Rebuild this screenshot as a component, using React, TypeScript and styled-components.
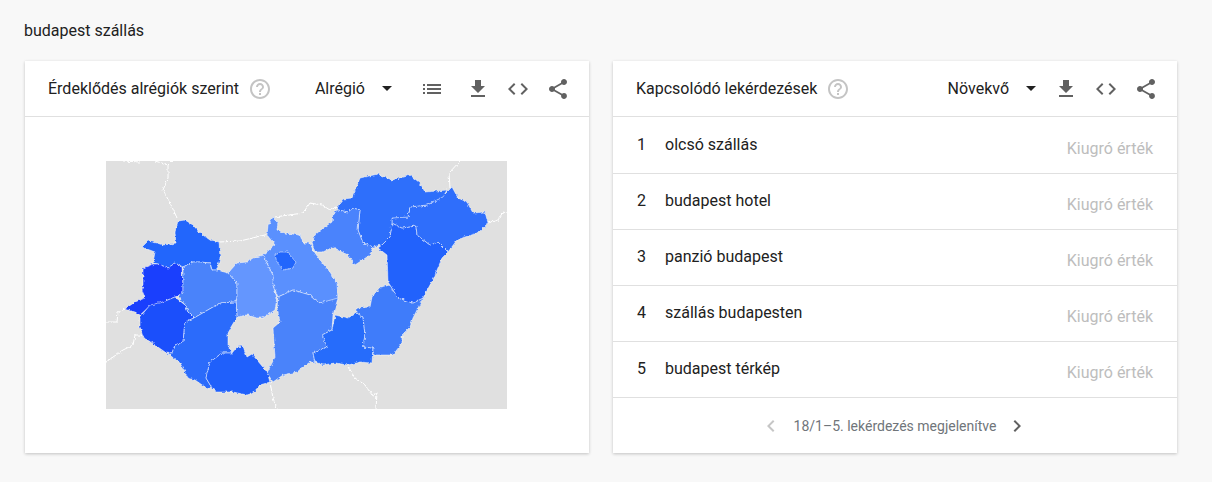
import { FC } from "react";
import styled, { createGlobalStyle } from "styled-components";

const GlobalStyle = createGlobalStyle`
  html, body {
    margin: 0;
    padding: 0;
    background: #f8f8f8;
    font-family: Roboto, "Liberation Sans", sans-serif;
  }
`;

const ICONS = {
  help: "M11 18h2v-2h-2v2zm1-16C6.48 2 2 6.48 2 12s4.48 10 10 10 10-4.48 10-10S17.52 2 12 2zm0 18c-4.41 0-8-3.59-8-8s3.59-8 8-8 8 3.59 8 8-3.59 8-8 8zm0-14c-2.21 0-4 1.79-4 4h2c0-1.1.9-2 2-2s2 .9 2 2c0 2-3 1.75-3 5h2c0-2.25 3-2.5 3-5 0-2.21-1.79-4-4-4z",
  list: "M3 13h2v-2H3v2zm0 4h2v-2H3v2zm0-8h2V7H3v2zm4 4h14v-2H7v2zm0 4h14v-2H7v2zM7 7v2h14V7H7z",
  download: "M19 9h-4V3H9v6H5l7 7 7-7zM5 18v2h14v-2H5z",
  code: "M9.4 16.6L4.8 12l4.6-4.6L8 6l-6 6 6 6 1.4-1.4zm5.2 0l4.6-4.6-4.6-4.6L16 6l6 6-6 6-1.4-1.4z",
  share:
    "M18 16.08c-.76 0-1.44.3-1.96.77L8.91 12.7c.05-.23.09-.46.09-.7s-.04-.47-.09-.7l7.05-4.11c.54.5 1.25.81 2.04.81 1.66 0 3-1.34 3-3s-1.34-3-3-3-3 1.34-3 3c0 .24.04.47.09.7L8.04 9.81C7.5 9.31 6.79 9 6 9c-1.66 0-3 1.34-3 3s1.34 3 3 3c.79 0 1.5-.31 2.04-.81l7.12 4.16c-.05.21-.08.43-.08.65 0 1.61 1.31 2.92 2.92 2.92 1.61 0 2.92-1.31 2.92-2.92s-1.31-2.92-2.92-2.92z",
  prev: "M15.41 7.41L14 6l-6 6 6 6 1.41-1.41L10.83 12z",
  next: "M10 6L8.59 7.41 13.17 12l-4.58 4.59L10 18l6-6z",
};

const Icon: FC<{ name: keyof typeof ICONS; color?: string }> = ({
  name,
  color = "#616161",
}) => (
  <IconSvg viewBox="0 0 24 24" fill={color}>
    <path d={ICONS[name]} />
  </IconSvg>
);

const REGIONS: { fill: string; points: string }[] = [
  {
    fill: "#2266fc",
    points:
      "142,247 148,241 157,243 163,245 176,243 175,232 178,221 185,220 193,225 200,233 210,240 219,242 220,258 217,270 212,270 210,263 200,262 193,262 183,267 175,263 168,268 158,264 153,263 155,252 147,249",
  },
  {
    fill: "#1a3ffd",
    points:
      "143,268 153,264 158,264 168,268 175,263 182,267 183,285 183,293 175,297 163,302 150,306 140,315 135,312 125,309 135,302 145,298 142,290 143,285",
  },
  {
    fill: "#1b4ffb",
    points:
      "140,317 150,305 163,302 175,297 185,305 188,312 194,318 185,322 183,342 175,345 172,353 165,352 155,345 143,337 140,327",
  },
  {
    fill: "#4a83fa",
    points:
      "183,267 193,262 200,262 210,263 212,270 217,270 228,273 237,283 237,298 236,302 220,303 194,318 188,312 185,305 178,296 183,293",
  },
  {
    fill: "#6496fe",
    points:
      "228,273 237,263 247,262 253,258 263,255 268,265 273,275 273,285 277,298 275,310 263,318 257,318 247,315 237,317 236,302 237,298 237,283",
  },
  {
    fill: "#5a90fe",
    points:
      "268,225 273,217 278,222 277,230 285,233 300,235 303,243 310,243 313,250 320,260 330,272 337,283 338,300 325,302 320,303 310,295 293,290 278,297 273,285 273,275 263,255 275,245 267,235",
  },
  {
    fill: "#2266fc",
    points: "275,255 280,252 287,252 296,262 293,268 283,270 277,262",
  },
  {
    fill: "#4a83fa",
    points:
      "278,297 293,290 310,295 320,303 338,298 333,315 332,330 322,335 327,347 313,353 315,362 310,362 297,372 283,375 273,382 267,373 275,357 273,328 280,322 277,308",
  },
  {
    fill: "#266cfb",
    points:
      "335,315 348,318 357,313 363,317 365,335 363,347 373,348 372,363 360,362 348,365 335,363 323,365 315,362 313,353 327,347 322,335 332,330",
  },
  {
    fill: "#3f7cfa",
    points:
      "357,308 370,307 372,297 380,287 390,285 398,298 413,303 423,298 413,318 410,327 402,335 402,343 393,355 373,355 373,348 363,347 365,335 363,317 357,313",
  },
  {
    fill: "#2262fc",
    points:
      "378,248 387,255 388,282 390,285 398,298 413,303 423,298 430,285 433,280 442,258 448,252 438,242 430,245 417,235 416,226 402,228 392,223 390,237 382,245",
  },
  {
    fill: "#2f6efb",
    points:
      "392,218 398,217 408,217 410,207 427,205 442,197 452,187 458,198 467,202 473,213 485,212 488,223 478,233 465,237 457,240 448,252 438,242 430,245 417,235 416,226 402,228 392,223",
  },
  {
    fill: "#2e6ffb",
    points:
      "337,207 343,199 352,198 360,178 378,174 392,180 410,175 420,183 425,192 447,190 443,197 427,205 410,207 408,217 392,218 392,223 390,237 382,245 373,247 363,243 358,230 360,210 353,208 348,212 338,210",
  },
  {
    fill: "#4a83fc",
    points:
      "333,213 338,210 348,212 353,208 360,210 358,230 363,243 373,247 370,255 355,265 348,255 342,252 333,247 323,252 315,252 312,243 315,235 323,228 332,222",
  },
  {
    fill: "#2b6bfb",
    points:
      "194,318 220,303 236,302 237,317 228,332 228,345 232,353 222,353 210,362 206,378 212,388 208,389 195,380 188,378 180,363 167,353 172,353 175,345 183,342 185,322",
  },
  {
    fill: "#2060fb",
    points:
      "210,362 222,353 232,353 237,347 243,346 247,357 252,354 267,372 270,382 260,385 253,393 247,395 233,392 217,392 212,388 206,378",
  },
];

const BORDERS = [
  "123,161 140,162",
  "155,161 168,165 172,161",
  "168,165 168,178 163,190 172,207 177,218",
  "219,242 240,241 265,235 270,234",
  "275,217 303,213 310,203 322,205 330,210 337,207",
  "450,188 449,173 460,161",
  "488,223 498,220 503,212 507,213",
  "270,382 273,398 277,409",
  "106,322 117,322 118,312 125,309",
  "106,362 123,350 133,345 135,335 140,335 147,337",
  "348,367 355,378 365,385 372,395 377,393 376,409",
];

const RegionMap: FC = () => (
  <MapSvg viewBox="106 161 401 248">
    <defs>
      <filter
        id="rough"
        x="106"
        y="161"
        width="401"
        height="248"
        filterUnits="userSpaceOnUse"
        colorInterpolationFilters="sRGB"
      >
        <feTurbulence type="fractalNoise" baseFrequency="0.32" numOctaves="2" seed="4" />
        <feDisplacementMap
          in="SourceGraphic"
          scale="3.5"
          xChannelSelector="R"
          yChannelSelector="G"
        />
        <feGaussianBlur stdDeviation="0.3" />
      </filter>
    </defs>
    <rect x="106" y="161" width="401" height="248" fill="#e0e0e0" />
    <g filter="url(#rough)">
      {BORDERS.map((points) => (
        <polyline key={points} points={points} fill="none" stroke="#fff" strokeWidth="1" />
      ))}
      {REGIONS.map((r) => (
        <polygon
          key={r.points}
          points={r.points}
          fill={r.fill}
          stroke="#fff"
          strokeOpacity="0.55"
          strokeWidth="0.9"
        />
      ))}
    </g>
  </MapSvg>
);

const QUERIES = [
  "olcsó szállás",
  "budapest hotel",
  "panzió budapest",
  "szállás budapesten",
  "budapest térkép",
];

const CardHeader: FC<{ title: string; filter: string; hasList?: boolean }> = ({
  title,
  filter,
  hasList,
}) => (
  <Header>
    <CardTitle>{title}</CardTitle>
    <HelpSlot>
      <Icon name="help" color="#c4c4c4" />
    </HelpSlot>
    <Select>
      {filter}
      <Caret />
    </Select>
    {hasList && (
      <ListSlot>
        <Icon name="list" />
      </ListSlot>
    )}
    <Actions>
      <Icon name="download" />
      <Icon name="code" />
      <Icon name="share" />
    </Actions>
  </Header>
);

export default function App() {
  return (
    <Page>
      <GlobalStyle />
      <Term>budapest szállás</Term>
      <Cards>
        <Card>
          <CardHeader title="Érdeklődés alrégiók szerint" filter="Alrégió" hasList />
          <MapBody>
            <RegionMap />
          </MapBody>
        </Card>
        <Card>
          <CardHeader title="Kapcsolódó lekérdezések" filter="Növekvő" />
          <List>
            {QUERIES.map((q, i) => (
              <Row key={q}>
                <RowIndex>{i + 1}</RowIndex>
                <RowLabel>{q}</RowLabel>
                <RowValue>Kiugró érték</RowValue>
              </Row>
            ))}
          </List>
          <Pager>
            <Icon name="prev" color="#c6c6c6" />
            <PagerText>18/1–5. lekérdezés megjelenítve</PagerText>
            <Icon name="next" />
          </Pager>
        </Card>
      </Cards>
    </Page>
  );
}

const Page = styled.div`
  width: 1212px;
  height: 482px;
  box-sizing: border-box;
  padding: 21px 35px 0 25px;
  color: #212121;
`;

const Term = styled.div`
  margin-left: -1px;
  height: 19px;
  line-height: 19px;
  font-size: 16px;
`;

const Cards = styled.div`
  display: grid;
  grid-template-columns: 564px 564px;
  gap: 24px;
  margin-top: 21px;
`;

const Card = styled.section`
  display: flex;
  flex-direction: column;
  height: 392px;
  background: #fff;
  box-shadow: 0 1px 3px rgba(0, 0, 0, 0.22);
`;

const Header = styled.header`
  display: flex;
  align-items: center;
  flex: none;
  height: 55px;
  padding: 0 19px 0 23px;
  border-bottom: 1px solid #e0e0e0;
`;

const CardTitle = styled.h2`
  margin: 0;
  font-size: 16px;
  font-weight: 400;
  color: #212121;
`;

const HelpSlot = styled.span`
  display: flex;
  margin-left: 9px;
`;

const Select = styled.div`
  display: flex;
  align-items: center;
  margin-left: auto;
  font-size: 16px;
  color: #212121;
`;

const Caret = styled.span`
  width: 0;
  height: 0;
  margin-left: 17px;
  border-left: 5.5px solid transparent;
  border-right: 5.5px solid transparent;
  border-top: 5.5px solid #212121;
`;

const ListSlot = styled.span`
  display: flex;
  margin: 0 4px 0 28px;
`;

const Actions = styled.div`
  display: flex;
  gap: 16px;
  margin-left: 18px;
`;

const IconSvg = styled.svg`
  display: block;
  flex: none;
  width: 24px;
  height: 24px;
`;

const MapBody = styled.div`
  display: flex;
  flex: 1;
  align-items: center;
  justify-content: center;
  padding-right: 1px;
`;

const MapSvg = styled.svg`
  display: block;
  width: 401px;
  height: 248px;
`;

const List = styled.ol`
  flex: 1;
  margin: 0;
  padding: 1px 0 0;
  list-style: none;
`;

const Row = styled.li`
  display: flex;
  align-items: center;
  box-sizing: border-box;
  height: 56px;
  padding: 0 24px;
  border-bottom: 1px solid #e0e0e0;
  font-size: 16px;
`;

const RowIndex = styled.span`
  width: 28px;
  margin-top: -3px;
`;

const RowLabel = styled.span`
  flex: 1;
  margin-top: -3px;
`;

const RowValue = styled.span`
  margin-top: 5px;
  color: #bdbdbd;
`;

const Pager = styled.nav`
  display: flex;
  flex: none;
  align-items: center;
  justify-content: center;
  height: 55px;
  padding-right: 2px;
`;

const PagerText = styled.span`
  margin: 0 9px 0 11px;
  font-size: 14px;
  color: #70757a;
`;
